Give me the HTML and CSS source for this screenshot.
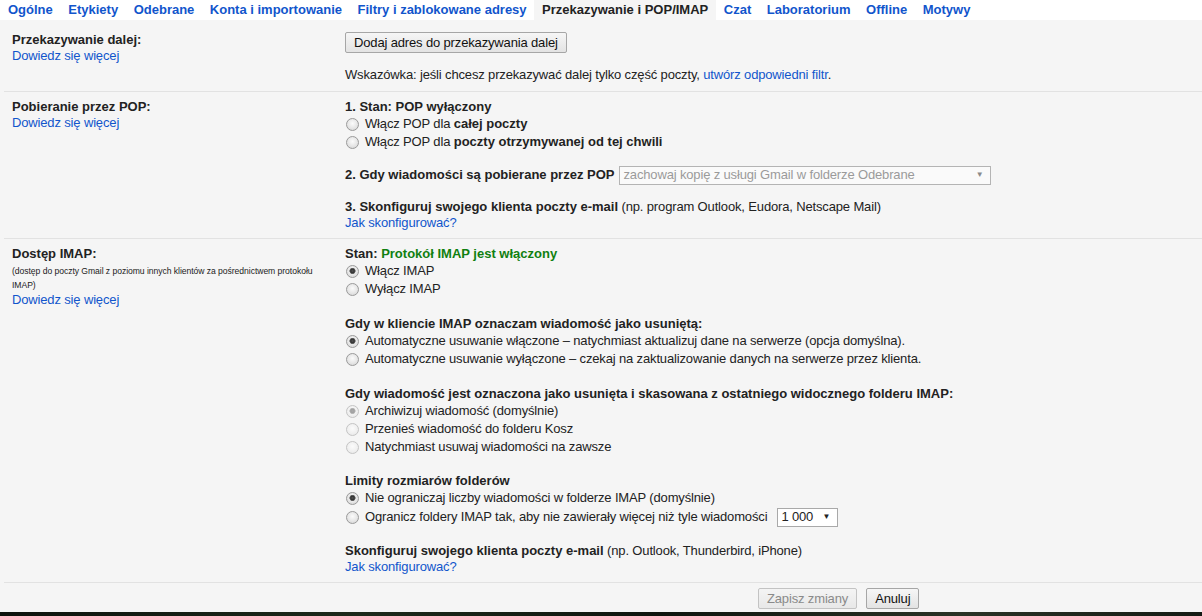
FILE: index.html
```html
<!DOCTYPE html>
<html lang="pl">
<head>
<meta charset="utf-8">
<title>Ustawienia – Przekazywanie i POP/IMAP</title>
<link rel="stylesheet" href="styles.css">
</head>
<body>
<nav class="tabs">
  <a class="tab">Ogólne</a>
  <a class="tab">Etykiety</a>
  <a class="tab">Odebrane</a>
  <a class="tab">Konta i importowanie</a>
  <a class="tab">Filtry i zablokowane adresy</a>
  <a class="tab active">Przekazywanie i POP/IMAP</a>
  <a class="tab">Czat</a>
  <a class="tab">Laboratorium</a>
  <a class="tab">Offline</a>
  <a class="tab">Motywy</a>
</nav>

<main class="settings">
  <section class="row row-first">
    <div class="label">
      <div class="title">Przekazywanie dalej:</div>
      <a class="link">Dowiedz się więcej</a>
    </div>
    <div class="value">
      <button class="btn">Dodaj adres do przekazywania dalej</button>
      <div class="hint">Wskazówka: jeśli chcesz przekazywać dalej tylko część poczty, <a class="link">utwórz odpowiedni filtr</a>.</div>
    </div>
  </section>

  <section class="row">
    <div class="label">
      <div class="title">Pobieranie przez POP:</div>
      <a class="link">Dowiedz się więcej</a>
    </div>
    <div class="value">
      <div class="group">
        <div class="line"><b>1. Stan: POP wyłączony</b></div>
        <label class="opt"><input type="radio" class="radio" name="pop">Włącz POP dla&nbsp;<b>całej poczty</b></label>
        <label class="opt"><input type="radio" class="radio" name="pop">Włącz POP dla&nbsp;<b>poczty otrzymywanej od tej chwili</b></label>
      </div>
      <div class="group selrow">
        <b>2. Gdy wiadomości są pobierane przez POP</b>
        <span class="select select-wide disabled"><span>zachowaj kopię z usługi Gmail w folderze Odebrane</span><span class="arrow">▼</span></span>
      </div>
      <div class="group last">
        <div class="line"><b>3. Skonfiguruj swojego klienta poczty e-mail</b> (np. program Outlook, Eudora, Netscape Mail)</div>
        <a class="link line">Jak skonfigurować?</a>
      </div>
    </div>
  </section>

  <section class="row">
    <div class="label">
      <div class="title">Dostęp IMAP:</div>
      <div class="small">(dostęp do poczty Gmail z poziomu innych klientów za pośrednictwem protokołu IMAP)</div>
      <a class="link">Dowiedz się więcej</a>
    </div>
    <div class="value">
      <div class="group g18">
        <div class="line"><b>Stan: <span class="green">Protokół IMAP jest włączony</span></b></div>
        <label class="opt"><input type="radio" class="radio" name="imap" checked>Włącz IMAP</label>
        <label class="opt"><input type="radio" class="radio" name="imap">Wyłącz IMAP</label>
      </div>
      <div class="group g18">
        <div class="line"><b>Gdy w kliencie IMAP oznaczam wiadomość jako usuniętą:</b></div>
        <label class="opt"><input type="radio" class="radio" name="exp" checked>Automatyczne usuwanie włączone – natychmiast aktualizuj dane na serwerze (opcja domyślna).</label>
        <label class="opt"><input type="radio" class="radio" name="exp">Automatyczne usuwanie wyłączone – czekaj na zaktualizowanie danych na serwerze przez klienta.</label>
      </div>
      <div class="group g17">
        <div class="line"><b>Gdy wiadomość jest oznaczona jako usunięta i skasowana z ostatniego widocznego folderu IMAP:</b></div>
        <label class="opt"><input type="radio" class="radio" name="del" checked disabled>Archiwizuj wiadomość (domyślnie)</label>
        <label class="opt"><input type="radio" class="radio" name="del" disabled>Przenieś wiadomość do folderu Kosz</label>
        <label class="opt"><input type="radio" class="radio" name="del" disabled>Natychmiast usuwaj wiadomości na zawsze</label>
      </div>
      <div class="group g16">
        <div class="line"><b>Limity rozmiarów folderów</b></div>
        <label class="opt"><input type="radio" class="radio" name="lim" checked>Nie ograniczaj liczby wiadomości w folderze IMAP (domyślnie)</label>
        <label class="opt opt-sel"><input type="radio" class="radio" name="lim">Ogranicz foldery IMAP tak, aby nie zawierały więcej niż tyle wiadomości <span class="select select-num"><span>1 000</span><span class="arrow">▼</span></span></label>
      </div>
      <div class="group last">
        <div class="line"><b>Skonfiguruj swojego klienta poczty e-mail</b> (np. Outlook, Thunderbird, iPhone)</div>
        <a class="link line">Jak skonfigurować?</a>
      </div>
    </div>
  </section>

  <footer class="actions">
    <button class="btn" disabled>Zapisz zmiany</button>
    <button class="btn">Anuluj</button>
  </footer>
</main>
<div class="backdrop"></div>
</body>
</html>
```

FILE: styles.css
```css
* { box-sizing: border-box; }

html, body {
  margin: 0;
  padding: 0;
  height: 616px;
  overflow: hidden;
}

body {
  font-family: "Liberation Sans", Arial, sans-serif;
  font-size: 13px;
  line-height: 16px;
  letter-spacing: -0.15px;
  color: #222;
  background: #f5f5f5;
}

b, .title, .tab { font-weight: bold; letter-spacing: 0; }

.tabs {
  display: flex;
  height: 20px;
  background: #fff;
}

.tab {
  padding: 0 7.75px;
  line-height: 20px;
  color: #15c;
  white-space: nowrap;
}

.tab:first-child { padding-left: 8px; }

.tab.active {
  background: #f5f5f5;
  color: #222;
}

.settings {
  padding-top: 5px;
  background: #f5f5f5;
  height: 592px;
}

.row {
  display: flex;
  padding: 7px 0 7px;
  margin-left: 4px;
  border-bottom: 1px solid #e2e2e2;
}

.row-first { padding-bottom: 8px; }

.label {
  width: 341px;
  flex: none;
  padding: 0 15px 0 8px;
}

.value {
  flex: 1;
  min-width: 0;
}

.link {
  color: #15c;
  display: block;
}

.hint .link { display: inline; }

.small {
  font-size: 8.6px;
  line-height: 14px;
  letter-spacing: -0.05px;
  padding-top: 2px;
}

.line { display: block; }

.btn {
  font-family: "Liberation Sans", Arial, sans-serif;
  font-size: 13px;
  letter-spacing: -0.15px;
  height: 21px;
  padding: 0 8px;
  color: #111;
  background: linear-gradient(#f6f6f6, #e3e3e3);
  border: 1px solid #a6a6a6;
  border-radius: 2px;
  line-height: 19px;
}

.btn:disabled {
  color: #8a8a8a;
  border-color: #c3c3c3;
  background: linear-gradient(#f4f4f4, #e8e8e8);
}

.hint { margin-top: 14px; }

.group { margin-bottom: 14px; }
.group.g18 { margin-bottom: 18px; }
.group.g17 { margin-bottom: 17px; }
.group.g16 { margin-bottom: 16px; }
.group.last { margin-bottom: 0; }

.opt {
  display: flex;
  align-items: center;
  height: 18px;
  white-space: nowrap;
}

.opt-sel { height: 20px; }

.radio {
  appearance: none;
  -webkit-appearance: none;
  width: 13px;
  height: 13px;
  margin: 0 6px 0 1px;
  border: 1px solid #9a9a9a;
  border-radius: 50%;
  background: radial-gradient(circle at 50% 40%, #fbfbfb 0, #e6e6e6 55%, #d0d0d0 100%);
  flex: none;
}

.radio:checked {
  background:
    radial-gradient(circle at 50% 45%, #555 0, #333 1.8px, #6a6a6a 2.8px, rgba(0,0,0,0) 3.4px),
    radial-gradient(circle at 50% 40%, #fbfbfb 0, #e6e6e6 55%, #d0d0d0 100%);
}

.radio:disabled {
  border-color: #c4c4c4;
  background: radial-gradient(circle at 50% 40%, #fbfbfb 0, #f0f0f0 55%, #e4e4e4 100%);
}

.radio:disabled:checked {
  background:
    radial-gradient(circle at 50% 45%, #aaa 0, #a0a0a0 1.8px, #bdbdbd 2.8px, rgba(0,0,0,0) 3.4px),
    radial-gradient(circle at 50% 40%, #fbfbfb 0, #f0f0f0 55%, #e4e4e4 100%);
}

.green { color: #108010; }

.selrow {
  display: flex;
  align-items: center;
  height: 20px;
  white-space: nowrap;
}

.select {
  display: inline-flex;
  align-items: center;
  justify-content: space-between;
  height: 19px;
  border: 1px solid #a9a9a9;
  background: #fff;
  padding: 0 7px 0 3px;
  color: #222;
  white-space: nowrap;
}

.select .arrow {
  font-size: 8px;
  line-height: 10px;
}

.select-wide {
  width: 372px;
  margin-left: 5px;
}

.select.disabled {
  color: #9a9a9a;
  border-color: #b4b4b4;
  background: #fafafa;
}

.select.disabled .arrow { color: #8a8a8a; }

.select-num {
  width: 61px;
  margin-left: 10px;
}

.actions {
  display: flex;
  gap: 9px;
  padding: 5px 0 0 758px;
}

.backdrop {
  height: 4px;
  background: linear-gradient(90deg, #0d130d, #1d2a1b 30%, #0e150e 55%, #2a3326 80%, #151b14);
}
```
